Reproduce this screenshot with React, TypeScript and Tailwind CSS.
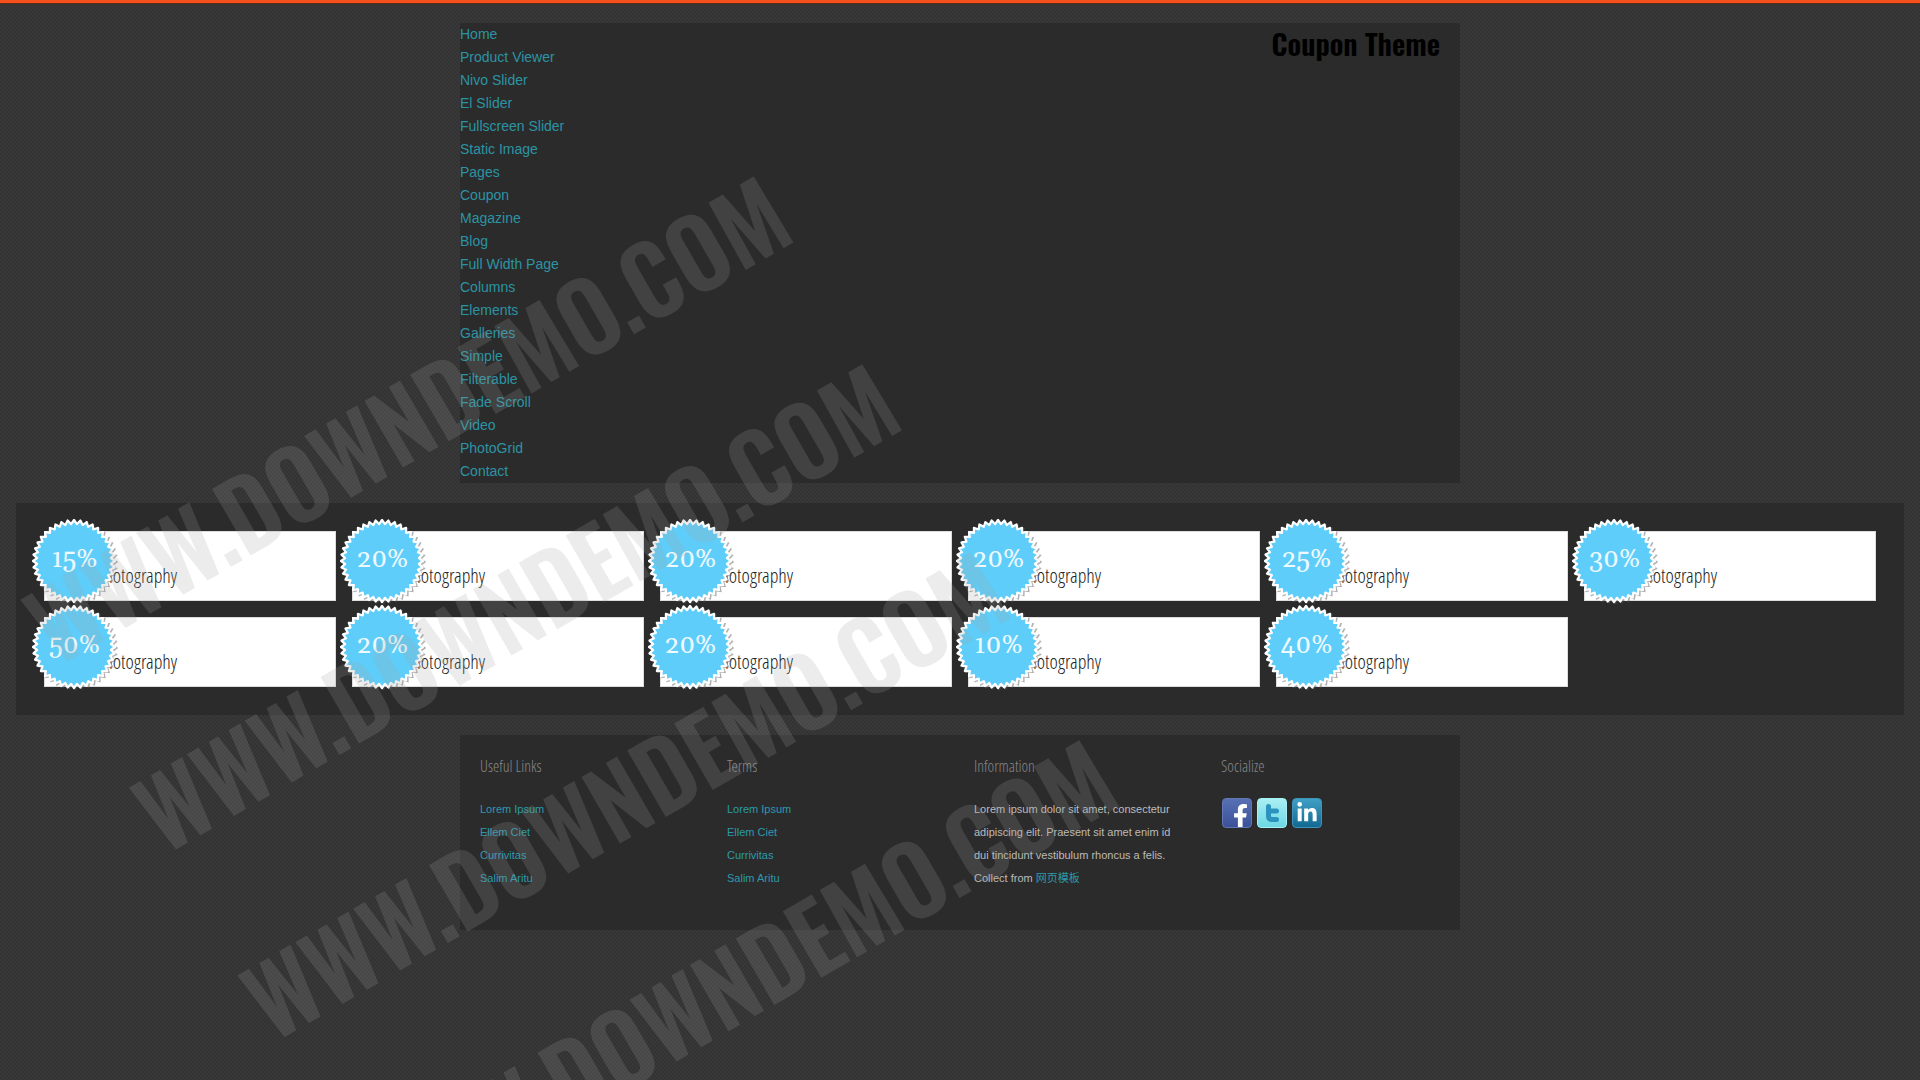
import { FaFacebookF, FaLinkedinIn } from 'react-icons/fa';

const menu = [
  'Home', 'Product Viewer', 'Nivo Slider', 'El Slider', 'Fullscreen Slider', 'Static Image', 'Pages',
  'Coupon', 'Magazine', 'Blog', 'Full Width Page', 'Columns', 'Elements', 'Galleries', 'Simple',
  'Filterable', 'Fade Scroll', 'Video', 'PhotoGrid', 'Contact',
];

const discounts = ['15%', '20%', '20%', '20%', '25%', '30%', '50%', '20%', '20%', '10%', '40%'];

const footerLinks = ['Lorem Ipsum', 'Ellem Ciet', 'Currivitas', 'Salim Aritu'];

const stamps = ['a', 'b', 'c', 'd'];

// Saw-toothed ring of a seal, as a list of polygon points.
function teeth(count: number, outer: number, inner: number) {
  return Array.from({ length: count * 2 }, (_, i) => {
    const r = i % 2 === 0 ? outer : inner;
    const a = (Math.PI * i) / count;
    return `${(42 + r * Math.sin(a)).toFixed(2)},${(42 - r * Math.cos(a)).toFixed(2)}`;
  }).join(' ');
}

const edge = teeth(40, 41, 37);

function Seal({ value }: { value: string }) {
  return (
    <div className="absolute -left-[13px] -top-[13px] flex h-[86px] w-[86px]">
      <svg viewBox="0 0 86 86" className="absolute inset-0 h-full w-full" aria-hidden="true">
        <polygon points={edge} transform="translate(1.500 1)" fill="#555" stroke="#555" strokeWidth="2" opacity="0.45" />
        <polygon points={edge} fill="#5fcdf9" stroke="#fff" strokeWidth="2.2" strokeLinejoin="round" />
      </svg>
      <span className="relative w-[85px] text-center font-['Gelasio'] text-[26px] leading-[82px] text-white/90">
        {value}
      </span>
    </div>
  );
}

function Card({ value }: { value: string }) {
  return (
    <a href="#" className="relative block h-[70px] border border-[#ddd] bg-white pl-[51px] pt-[30px]">
      <h3 className="font-['Open_Sans_Condensed_Light'] text-xl leading-7 text-[#222]">Photography</h3>
      <Seal value={value} />
    </a>
  );
}

function LinkColumn({ title }: { title: string }) {
  return (
    <section>
      <FooterTitle>{title}</FooterTitle>
      <ul>
        {footerLinks.map((l) => (
          <li key={l}>
            <a href="#" className="text-[#2b9aab]">{l}</a>
          </li>
        ))}
      </ul>
    </section>
  );
}

function FooterTitle({ children }: { children: string }) {
  return (
    <h4 className="mb-5 font-['Open_Sans_Condensed_Light'] text-base leading-[23px] text-[#888]">{children}</h4>
  );
}

export default function App() {
  return (
    <div className="relative min-h-screen overflow-hidden border-t-[3px] border-[#f4511e] bg-[#363636] bg-[repeating-conic-gradient(#333_0_25%,#383838_0_50%)] bg-[length:4px_4px] font-['Liberation_Sans','Noto_Sans_CJK_SC',sans-serif]">
      <div className="h-px bg-[#5c2a17]" />
      <header className="mx-auto mt-[19px] flex max-w-[1000px] items-start justify-between bg-[#2b2b2b] pr-5">
        <nav>
          <ul className="text-sm leading-[23px]">
            {menu.map((m) => (
              <li key={m}>
                <a href="#" className="text-[#2b94a4]">{m}</a>
              </li>
            ))}
          </ul>
        </nav>
        <h1 className="font-['Oswald'] text-[29px] font-semibold leading-10 text-black">Coupon Theme</h1>
      </header>

      <main className="mx-4 mt-5 grid grid-cols-6 gap-4 bg-[#2b2b2b] px-7 pb-7 pt-7">
        {discounts.map((d, i) => (
          <Card key={i} value={d} />
        ))}
      </main>

      <footer className="mx-auto mt-5 grid max-w-[1000px] grid-cols-4 gap-7 bg-[#2b2b2b] px-5 pb-10 pt-5 text-[11px] leading-[23px]">
        <LinkColumn title="Useful Links" />
        <LinkColumn title="Terms" />
        <section>
          <FooterTitle>Information</FooterTitle>
          <p className="pr-4 text-[#bbb]">
            Lorem ipsum dolor sit amet, consectetur adipiscing elit. Praesent sit amet enim id dui tincidunt
            vestibulum rhoncus a felis. Collect from <a href="#" className="text-[#2b9aab]">网页模板</a>
          </p>
        </section>
        <section>
          <FooterTitle>Socialize</FooterTitle>
          <div className="flex gap-[5px] pl-px">
            <a href="#" aria-label="Facebook" className="relative h-[30px] w-[30px] overflow-hidden rounded border border-[#5f77b5] bg-linear-to-b from-[#5870b3] to-[#3b5299]">
              <FaFacebookF className="absolute -bottom-px right-0.5 h-6 w-[17px] text-white" />
            </a>
            <a href="#" aria-label="Twitter" className="h-[30px] w-[30px] rounded border border-[#a5f0f4] bg-linear-to-b from-[#a9eff2] to-[#6cd8e4]">
              <svg viewBox="0 0 28 28" className="h-full w-full" fill="none" stroke="#2b93bd" strokeWidth="5" strokeLinecap="round" strokeLinejoin="round">
                <path d="M10.500 7.500V17Q10.500 20.500 14 20.500H18.500M10.500 12H18.500" />
              </svg>
            </a>
            <a href="#" aria-label="LinkedIn" className="flex h-[30px] w-[30px] items-center justify-center rounded border border-[#3f93b8] bg-linear-to-b from-[#3f9fc4] to-[#116a92]">
              <FaLinkedinIn className="h-[22px] w-[22px] text-white" />
            </a>
          </div>
        </section>
      </footer>

      <div className="pointer-events-none absolute -left-[19px] top-[534px] origin-top-left -rotate-30 whitespace-nowrap font-['Oswald'] text-[95px] font-semibold leading-[217px] text-[#a2a2a2]/20">
        {stamps.map((s) => (
          <div key={s}>WWW.DOWNDEMO.COM</div>
        ))}
      </div>
    </div>
  );
}
